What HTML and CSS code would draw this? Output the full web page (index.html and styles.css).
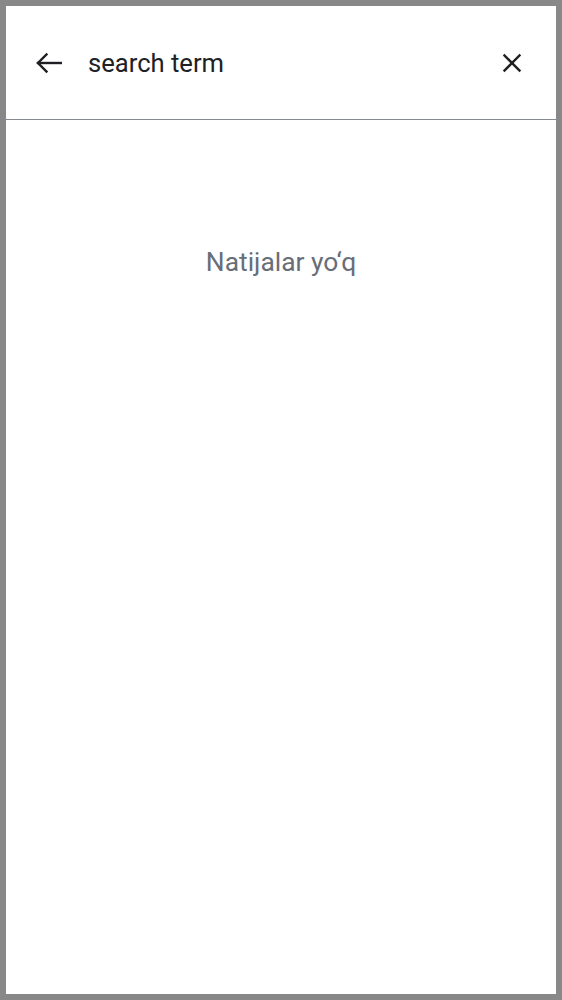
FILE: index.html
```html
<!DOCTYPE html>
<html lang="uz">
<head>
<meta charset="utf-8">
<link rel="stylesheet" href="styles.css">
</head>
<body>
<div class="frame">
  <header class="search-bar">
    <button class="icon-btn back" aria-label="Back">
      <svg width="28" height="28" viewBox="0 0 28 28" fill="none" stroke="#1f1f23" stroke-width="2.4" stroke-linecap="square" stroke-linejoin="miter">
        <path d="M4 14H27"/>
        <path d="M12.5 5.5L4 14L12.5 22.5"/>
      </svg>
    </button>
    <div class="query">search term</div>
    <button class="icon-btn close" aria-label="Clear">
      <svg width="24" height="24" viewBox="0 0 24 24" fill="none" stroke="#1f1f23" stroke-width="2.4" stroke-linecap="square">
        <path d="M4.5 4.5L19.5 19.5"/>
        <path d="M19.5 4.5L4.5 19.5"/>
      </svg>
    </button>
  </header>
  <main class="results">
    <p class="empty">Natijalar yo‘q</p>
  </main>
</div>
</body>
</html>
```
FILE: styles.css
```css
* { box-sizing: border-box; }
html, body { margin: 0; padding: 0; }
body {
  background: #888888;
  font-family: Roboto, "Noto Sans", "Liberation Sans", sans-serif;
}
.frame {
  width: 562px;
  height: 1000px;
  border: 6px solid #888888;
  background: #ffffff;
  display: flex;
  flex-direction: column;
}
.search-bar {
  height: 114px;
  border-bottom: 1px solid #868b92;
  display: flex;
  align-items: center;
  padding: 0 30px 0 24px;
}
.icon-btn {
  background: none;
  border: 0;
  padding: 0;
  display: flex;
  align-items: center;
  justify-content: center;
}
.back { width: 36px; height: 36px; margin-right: 22px; }
.query {
  flex: 1;
  font-size: 25.6px;
  color: #202124;
}
.close { width: 28px; height: 28px; }
.results {
  flex: 1;
  display: flex;
  flex-direction: column;
  align-items: center;
}
.empty {
  margin: 127px 0 0;
  font-size: 26.4px;
  color: #686e77;
}
```
